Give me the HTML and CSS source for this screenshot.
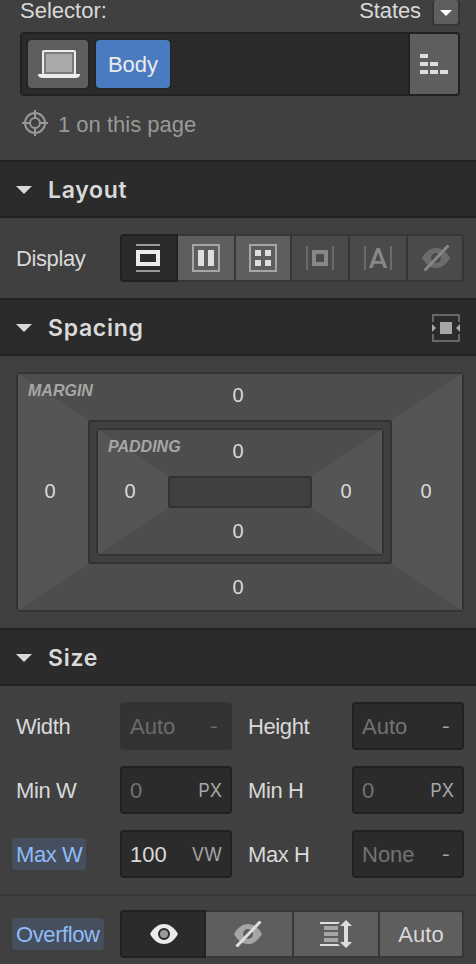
FILE: index.html
```html
<!DOCTYPE html>
<html lang="en">
	<head>
		<meta charset="utf-8">
		<title>Style panel</title>
		<link rel="stylesheet" href="styles.css">
	</head>
	<body>
		<div class="selector">
			<div class="selector-head">
				<span>Selector:</span>
				<span class="states">States
					<button class="states-btn"><svg width="12" height="6"><path d="M0 0h12L6 6z" fill="#fff"/></svg></button>
				</span>
			</div>
			<div class="selector-box">
				<div class="chips">
					<div class="chip">
						<svg width="60" height="48">
							<rect x="14" y="10" width="34" height="25" rx="2" fill="#ececec"/>
							<rect x="16" y="12" width="30" height="22" fill="#7b7b7b"/>
							<rect x="18" y="14" width="26" height="18" fill="#a9a9a9"/>
							<path d="M10 34h42c0 3-2 4-5 4H15c-3 0-5-1-5-4z" fill="#ececec"/>
						</svg>
					</div>
					<div class="chip chip-body">Body</div>
				</div>
				<button class="inherit">
					<svg width="28" height="20" fill="#dedede">
						<path d="M0 0h8v4H0zM0 8h8v4H0zM10 8h8v4h-8zM0 16h8v4H0zM10 16h8v4h-8zM20 16h8v4h-8z"/>
					</svg>
				</button>
			</div>
			<div class="usage">
				<svg width="26" height="26" fill="none" stroke="#999" stroke-width="2">
					<circle cx="13" cy="13" r="10"/>
					<circle cx="13" cy="13" r="5"/>
					<path d="M13 0v8M13 18v8M0 13h8M18 13h8"/>
				</svg>
				<span>1 on this page</span>
			</div>
		</div>

		<div class="section-head">
			<svg class="arrow" width="16" height="8"><path d="M0 0h16L8 8z"/></svg>
			<h2>Layout</h2>
		</div>
		<div class="display-row">
			<span class="label">Display</span>
			<div class="group display-group">
				<button class="active">
					<svg width="24" height="28"><path d="M0 0h24v2H0zM0 26h24v2H0z" fill="#999"/><path d="M2 8h20v12H2z" fill="none" stroke="#ebebeb" stroke-width="4"/></svg>
				</button>
				<button>
					<svg width="28" height="28"><path d="M1 1h26v26H1z" fill="none" stroke="#a6a6a6" stroke-width="2"/><path d="M6 6h6v16H6zM16 6h6v16h-6z" fill="#dedede"/></svg>
				</button>
				<button>
					<svg width="28" height="28"><path d="M1 1h26v26H1z" fill="none" stroke="#a6a6a6" stroke-width="2"/><path d="M6 6h6v6H6zM16 6h6v6h-6zM6 16h6v6H6zM16 16h6v6h-6z" fill="#dedede"/></svg>
				</button>
				<button class="dim">
					<svg width="28" height="24"><path d="M0 0h2v24H0zM26 0h2v24h-2z" fill="#6b6b6b"/><path d="M8 6h12v12H8z" fill="none" stroke="#878787" stroke-width="4"/></svg>
				</button>
				<button class="dim">
					<svg width="28" height="36"><path d="M0 6h2v24H0zM26 6h2v24h-2z" fill="#6b6b6b"/><text class="inline-a" x="14" y="28" text-anchor="middle">A</text></svg>
				</button>
				<button class="dim none-btn">
					<svg width="28" height="26"><path d="M0 13C4 6 9 3 14 3s10 3 14 10c-4 7-9 10-14 10S4 20 0 13zM14 8a5 5 0 1 0 0 10 5 5 0 0 0 0-10z" fill="#6b6b6b" fill-rule="evenodd"/><path d="M2.500 25.500 26.500 0.500" stroke="#878787" stroke-width="3"/></svg>
				</button>
			</div>
		</div>

		<div class="section-head">
			<svg class="arrow" width="16" height="8"><path d="M0 0h16L8 8z"/></svg>
			<h2>Spacing</h2>
			<svg class="center-icon" width="28" height="28">
				<path d="M1 8V1h26v7M1 20v7h26v-7" fill="none" stroke="#666" stroke-width="2"/>
				<path d="M8 8h12v12H8zM0 10l4 4-4 4zM28 10l-4 4 4 4z" fill="#a6a6a6"/>
			</svg>
		</div>
		<div class="spacing">
			<div class="box">
				<div class="edges"></div>
				<span class="box-name">MARGIN</span>
				<span class="val top">0</span>
				<span class="val left">0</span>
				<span class="val right">0</span>
				<span class="val bottom">0</span>
				<div class="inner">
					<div class="box">
						<div class="edges"></div>
						<span class="box-name">PADDING</span>
						<span class="val top">0</span>
						<span class="val left">0</span>
						<span class="val right">0</span>
						<span class="val bottom">0</span>
						<div class="inner"></div>
					</div>
				</div>
			</div>
		</div>

		<div class="section-head">
			<svg class="arrow" width="16" height="8"><path d="M0 0h16L8 8z"/></svg>
			<h2>Size</h2>
		</div>
		<div class="size">
			<span class="label">Width</span>
			<div class="field disabled"><span>Auto</span><span class="unit dash">-</span></div>
			<span class="label second">Height</span>
			<div class="field"><span>Auto</span><span class="unit dash">-</span></div>
			<span class="label">Min W</span>
			<div class="field"><span>0</span><span class="unit">PX</span></div>
			<span class="label second">Min H</span>
			<div class="field"><span>0</span><span class="unit">PX</span></div>
			<span class="label set">Max W</span>
			<div class="field filled"><span>100</span><span class="unit">VW</span></div>
			<span class="label second">Max H</span>
			<div class="field"><span>None</span><span class="unit dash">-</span></div>
		</div>
		<div class="overflow-row">
			<span class="label set">Overflow</span>
			<div class="group overflow-group">
				<button class="active">
					<svg width="28" height="20"><path d="M0 10C4 3 9 0 14 0s10 3 14 10c-4 7-9 10-14 10S4 17 0 10z" fill="#ebebeb"/><circle cx="14" cy="10" r="5" fill="#999" stroke="#2b2b2b" stroke-width="2"/></svg>
				</button>
				<button class="hidden-btn">
					<svg width="28" height="26"><path d="M0 13C4 6 9 3 14 3s10 3 14 10c-4 7-9 10-14 10S4 20 0 13zM14 8a5 5 0 1 0 0 10 5 5 0 0 0 0-10z" fill="#a6a6a6" fill-rule="evenodd"/><path d="M2.500 25.500 26.500 0.500" stroke="#dedede" stroke-width="3"/></svg>
				</button>
				<button>
					<svg width="32" height="28"><path d="M4 6h14v4H4zM4 12h14v4H4zM4 18h14v4H4z" fill="#a6a6a6"/><path d="M0 2h20l-2 2H0zM0 24h18l2 2H0zM26 0l6 6h-4v16h4l-6 6-6-6h4V6h-4z" fill="#dedede"/></svg>
				</button>
				<button class="auto-btn">Auto</button>
			</div>
		</div>
	</body>
</html>
```
FILE: styles.css
```css
* {
	box-sizing: border-box;
}
body {
	margin: 0;
	height: 964px;
	overflow: hidden;
	background-color: #404040;
	color: #d9d9d9;
	font: 22px/26px "Liberation Sans", Arial, sans-serif;
}
svg {
	display: block;
	flex: none;
}
button {
	display: flex;
	align-items: center;
	justify-content: center;
	margin: 0;
	padding: 0;
	border: 0;
	background-color: #5e5e5e;
	color: #d9d9d9;
	font: inherit;
}

/* selector */
.selector {
	height: 160px;
	padding: 0 16px 0 20px;
}
.selector-head {
	display: flex;
	justify-content: space-between;
	height: 32px;
	line-height: 22px;
}
.states {
	display: flex;
	gap: 11px;
	letter-spacing: -0.1px;
}
.states-btn {
	width: 28px;
	height: 26px;
	border: 2px solid #363636;
	border-top: 0;
	border-radius: 4px;
}
.states-btn svg {
	margin-top: 2px;
}
.selector-box {
	display: flex;
	justify-content: space-between;
	height: 64px;
	border: 2px solid #212121;
	border-radius: 4px;
	background-color: #2b2b2b;
}
.chips {
	display: flex;
	gap: 8px;
	padding: 6px;
}
.chip {
	width: 60px;
	border-radius: 4px;
	background-color: #5e5e5e;
	box-shadow: 0 0 0 2px #262626;
}
.chip-body {
	width: 74px;
	background-color: #4a7abf;
	color: #ebebeb;
	line-height: 50px;
	text-align: center;
}
.inherit {
	width: 50px;
	border-left: 2px solid #212121;
	border-radius: 0 2px 2px 0;
}
.usage {
	display: flex;
	align-items: flex-start;
	gap: 10px;
	margin-top: 14px;
	padding-left: 2px;
	color: #999;
}
.usage span {
	margin-top: 2px;
}

/* section headers */
.section-head {
	display: flex;
	align-items: center;
	height: 58px;
	padding: 2px 16px 0;
	border: solid #212121;
	border-width: 2px 0;
	background-color: #2b2b2b;
}
.section-head h2 {
	margin: 0 0 0 16px;
	font: 600 23px/28px Inter, sans-serif;
	letter-spacing: 0.7px;
}
.arrow {
	fill: #d9d9d9;
}
.center-icon {
	margin-left: auto;
}

.label {
	justify-self: start;
	padding-top: 2px;
	letter-spacing: -0.4px;
}
.label.set {
	margin-left: -4px;
	padding: 4px 4px 2px;
	border-radius: 4px;
	background-color: #464f5d;
	color: #8fbcf8;
}
.label.second {
	margin-left: 16px;
}

/* button groups */
.display-row,
.overflow-row {
	display: grid;
	grid-template-columns: 104px 344px;
	align-items: center;
	padding: 0 16px;
}
.display-row {
	height: 80px;
}
.group {
	display: grid;
	height: 48px;
	border: 2px solid #363636;
	border-radius: 4px;
	background-color: #363636;
	column-gap: 2px;
}
.display-group {
	grid-template-columns: 54px 56px 54px 56px 56px 54px;
}
.overflow-group {
	grid-template-columns: 82px 86px 84px 82px;
}
.group button:last-child {
	border-radius: 0 2px 2px 0;
}
.group .dim {
	background-color: #4a4a4a;
}
/* active one covers the group's own border */
.group .active {
	margin: -2px;
	border: 2px solid #212121;
	border-radius: 4px 0 0 4px;
	background-color: #2b2b2b;
}
.display-group .active {
	padding-right: 2px;
}
.overflow-group .active {
	padding-left: 2px;
}
.hidden-btn {
	padding-right: 2px;
}
.none-btn {
	padding-left: 2px;
}
.auto-btn {
	padding-top: 2px;
}
.inline-a {
	fill: #878787;
	font: 500 28px Roboto, sans-serif;
}

/* spacing */
.spacing {
	height: 272px;
	padding: 16px 12px 16px 16px;
}
.box {
	display: grid;
	grid-template-columns: 70px 1fr 70px;
	grid-template-rows: 46px 1fr 46px;
	height: 100%;
	border: 2px solid #333;
	border-radius: 4px;
}
.edges {
	grid-area: 1 / 1 / 4 / 4;
	border: solid;
	border-width: 46px 70px;
	border-color: #4d4d4d #555;
}
.box-name {
	grid-area: 1 / 1 / 2 / 3;
	padding: 4px 0 0 10px;
	color: #a6a6a6;
	font-size: 16px;
	font-style: italic;
	font-weight: bold;
}
.val {
	place-self: center;
	font-size: 20px;
	line-height: 24px;
}
.top {
	grid-area: 1 / 2;
	padding: 0 4px 4px 0;
}
.left {
	grid-area: 2 / 1;
	padding: 0 6px 2px 0;
}
.right {
	grid-area: 2 / 3;
	padding: 0 2px 2px 0;
}
.bottom {
	grid-area: 3 / 2;
	padding-right: 4px;
}
.inner {
	grid-area: 2 / 2;
	padding: 6px;
	border: 2px solid #333;
	border-radius: 4px;
	background-color: #404040;
}

/* size */
.size {
	display: grid;
	grid-template-columns: 104px 112px 120px 112px;
	grid-auto-rows: 48px;
	row-gap: 16px;
	align-items: center;
	height: 210px;
	padding: 16px 16px 0;
	border-bottom: 2px solid #363636;
}
.field {
	display: flex;
	align-items: center;
	justify-content: space-between;
	height: 48px;
	padding: 2px 8px 0;
	border: 2px solid #212121;
	border-radius: 4px;
	background-color: #2b2b2b;
	color: #737373;
}
.field.disabled {
	border-color: #333;
	background-color: #333;
	color: #6b6b6b;
}
.field.filled {
	color: #d9d9d9;
}
.unit {
	padding-bottom: 1px;
	color: #a6a6a6;
	font: 18px/24px Inter, sans-serif;
}
.dash {
	padding-right: 4px;
}
.disabled .unit {
	color: #6b6b6b;
}
.overflow-row {
	height: 76px;
}
```
